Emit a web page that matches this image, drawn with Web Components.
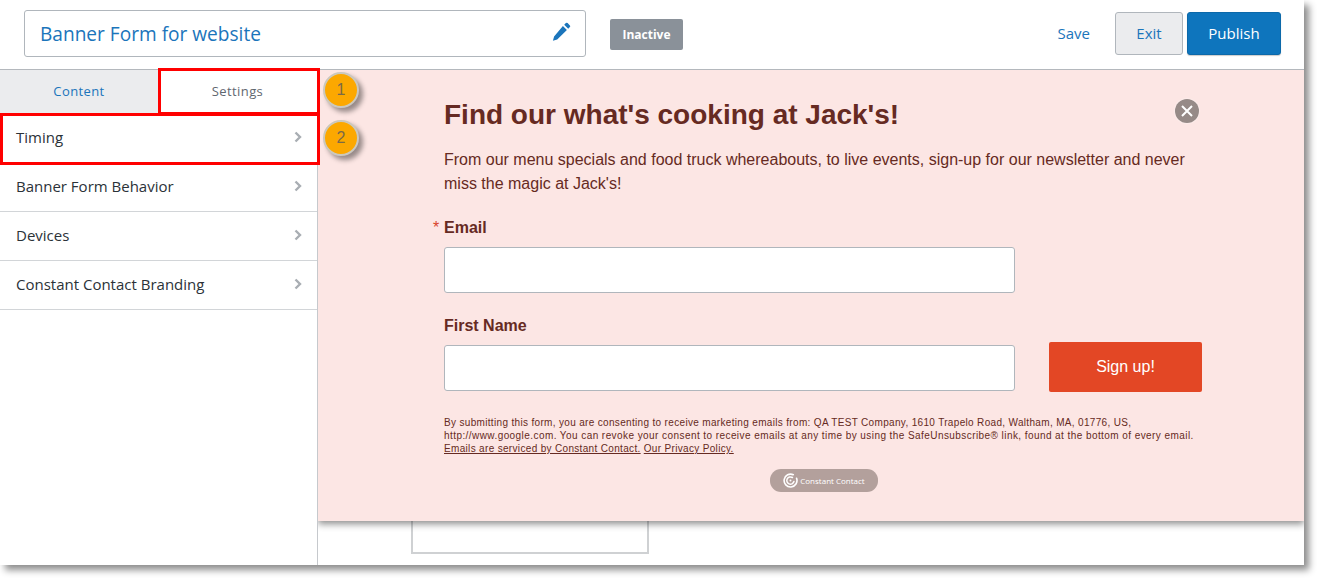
<!DOCTYPE html>
<html>
<head>
<meta charset="utf-8">
<title>Banner Form</title>
<style>
html, body { margin: 0; height: 100%; background: #fff; overflow: hidden; }
body { font-family: "Open Sans", sans-serif; }
</style>
</head>
<body>
<app-frame>
  <app-header slot="header"></app-header>
  <side-panel slot="side"></side-panel>
  <banner-form slot="main"></banner-form>
</app-frame>

<script>
class AppFrame extends HTMLElement {
    connectedCallback() {
        this.attachShadow({mode: 'open'});
        this.shadowRoot.innerHTML = `
      <style>
:host {
  display: grid;
  grid-template-rows: 70px 1fr;
  grid-template-columns: 318px 1fr;
  grid-template-areas:
    "header header"
    "side main";
  width: 1304px;
  height: 565px;
  background: #fff;
  box-shadow: 5px 5px 7px rgba(0,0,0,0.45);
  position: relative;
}
header { grid-area: header; }
aside { grid-area: side; border-right: 1px solid #c6c9cd; min-height: 0; position: relative; z-index: 2; }
main { grid-area: main; min-width: 0; min-height: 0; overflow: hidden; }
      </style>
      <header><slot name="header"></slot></header>
      <aside><slot name="side"></slot></aside>
      <main><slot name="main"></slot></main>
    `;
    }
}

class AppHeader extends HTMLElement {
    connectedCallback() {
        this.attachShadow({mode: 'open'});
        this.shadowRoot.innerHTML = `
      <style>
:host {
  display: flex;
  align-items: flex-start;
  height: 70px;
  box-sizing: border-box;
  border-bottom: 1px solid #b4b8bd;
  padding: 10px 23px 0 24px;
  font-family: "Open Sans", sans-serif;
}
.title {
  width: 562px;
  height: 47px;
  box-sizing: border-box;
  border: 1px solid #b0b6bc;
  border-radius: 3px;
  display: flex;
  align-items: center;
  justify-content: space-between;
  padding: 0 14px 0 15px;
  font-size: 19.1px;
  color: #1b75bb;
}
.title svg { display: block; margin-top: -3px; }
.badge {
  margin: 9px 0 0 24px;
  width: 73px;
  height: 31px;
  box-sizing: border-box;
  background: #8a9199;
  border-radius: 2px;
  color: #fff;
  font-size: 12px;
  font-weight: 700;
  display: flex;
  align-items: center;
  justify-content: center;
}
.actions {
  margin: 2px 0 0 auto;
  display: flex;
  align-items: center;
  font-size: 15px;
}
.save { color: #1b75bb; margin-right: 25px; padding-bottom: 2px; }
.btn {
  height: 43px;
  box-sizing: border-box;
  border-radius: 3px;
  padding-bottom: 2px;
  display: flex;
  align-items: center;
  justify-content: center;
}
.exit { width: 68px; background: #ebecee; border: 1px solid #b0b6bc; color: #1b75bb; margin-right: 4px; }
.publish { width: 94px; background: #0e75bd; border: 1px solid #0c69aa; color: #fff; box-shadow: 0 1px 1px rgba(0,0,0,0.2); }
      </style>
      <div class="title">
        <span>Banner Form for website</span>
        <svg width="20" height="20" viewBox="0 0 20 20"><path fill="#1b75bb" d="M14.9 1.1a1.2 1.2 0 0 1 1.7 0l2.3 2.3a1.2 1.2 0 0 1 0 1.7l-1.7 1.7-4-4zM11.9 3.9l4 4L6.2 17.6l-4.3 1.1 1.2-4.2z"/></svg>
      </div>
      <div class="badge">Inactive</div>
      <div class="actions">
        <span class="save">Save</span>
        <div class="btn exit">Exit</div>
        <div class="btn publish">Publish</div>
      </div>
    `;
    }
}

class SidePanel extends HTMLElement {
    connectedCallback() {
        this.attachShadow({mode: 'open'});
        const rows = ['Timing', 'Banner Form Behavior', 'Devices', 'Constant Contact Branding'];
        this.shadowRoot.innerHTML = `
      <style>
:host {
  display: block;
  font-family: "Open Sans", sans-serif;
  position: relative;
}
.tabs { display: flex; height: 44px; }
.tab {
  display: flex;
  align-items: center;
  justify-content: center;
  font-size: 13px;
  letter-spacing: 0.4px;
  padding-bottom: 3px;
  box-sizing: border-box;
}
.tab.content { width: 158px; background: #ebecee; color: #1b75bb; }
.tab.settings { flex: 1; color: #5f6770; }
.row {
  height: 49px;
  box-sizing: border-box;
  border-bottom: 1px solid #d2d5d8;
  display: flex;
  align-items: center;
  justify-content: space-between;
  padding: 0 15px 2px 16px;
  font-size: 15px;
  color: #2b3238;
}
.mark { position: absolute; border: 3px solid #f00; box-sizing: border-box; }
.mark.one { left: 158px; top: -2px; width: 162px; height: 47px; }
.mark.two { left: 0; top: 43px; width: 320px; height: 52px; }
.num {
  position: absolute;
  left: 323px;
  width: 36px;
  height: 36px;
  box-sizing: border-box;
  border-radius: 50%;
  background: #fca800;
  border: 2px solid #ccc8bd;
  box-shadow: 4px 4px 5px rgba(0,0,0,0.4);
  color: #7a6a48;
  font: 16px/32px "Liberation Sans", sans-serif;
  text-align: center;
}
.num.one { top: 2px; }
.num.two { top: 50px; }
      </style>
      <div class="tabs">
        <div class="tab content">Content</div>
        <div class="tab settings">Settings</div>
      </div>
      ${rows.map(r => `<div class="row"><span>${r}</span>
        <svg width="8" height="12" viewBox="0 0 8 12"><path d="M1.5 1.5l4.5 4.5-4.5 4.5" fill="none" stroke="#a9aeb3" stroke-width="2.4"/></svg></div>`).join('')}
      <div class="mark one"></div>
      <div class="mark two"></div>
      <div class="num one">1</div>
      <div class="num two">2</div>
    `;
    }
}

class BannerForm extends HTMLElement {
    connectedCallback() {
        this.attachShadow({mode: 'open'});
        this.shadowRoot.innerHTML = `
      <style>
:host {
  display: block;
  height: 100%;
  position: relative;
  font-family: "Liberation Sans", Arial, sans-serif;
  color: #662a22;
}
.peek {
  position: absolute;
  left: 93px;
  top: 430px;
  width: 238px;
  height: 54px;
  box-sizing: border-box;
  border: solid #cfd1d3;
  border-width: 0 2px 2px 2px;
  background: #fff;
}
.banner {
  position: relative;
  height: 451px;
  box-sizing: border-box;
  background: #fce6e4;
  box-shadow: 0 3px 7px rgba(0,0,0,0.45);
  padding: 29px 102px 0 126px;
}
h1 { margin: 0; font-size: 28px; line-height: 32px; font-weight: 700; }
p.lead { margin: 17px 0 0; font-size: 16px; line-height: 24px; width: 760px; }
label { display: block; font-size: 16px; font-weight: 700; line-height: 20px; position: relative; }
label.email { margin-top: 22px; }
label.name { margin-top: 23px; }
label i { position: absolute; left: -11px; color: #d8432a; font-style: normal; font-weight: 400; }
.input {
  margin-top: 9px;
  width: 571px;
  height: 46px;
  box-sizing: border-box;
  background: #fff;
  border: 1px solid #b0b6bc;
  border-radius: 3px;
}
.name-row { display: flex; align-items: flex-end; justify-content: space-between; }
.submit {
  width: 153px;
  height: 50px;
  margin-bottom: -1px;
  background: #e34725;
  color: #fff;
  border-radius: 2px;
  font-size: 16px;
  display: flex;
  align-items: center;
  justify-content: center;
}
.legal { margin: 25px 0 0; font-size: 10px; line-height: 13px; letter-spacing: 0.33px; white-space: nowrap; }
.legal .wide { letter-spacing: 0.43px; }
.legal u { text-decoration: underline; }
.brand {
  margin: 14px 0 0 326px;
  width: 108px;
  height: 23px;
  background: #b3a09c;
  border-radius: 11px;
  color: #fff;
  font: 500 8px "Open Sans", sans-serif;
  display: flex;
  align-items: center;
  justify-content: center;
  gap: 2px;
}
.close {
  position: absolute;
  left: 857px;
  top: 29px;
  width: 24px;
  height: 24px;
  border-radius: 50%;
  background: #968a87;
  box-shadow: 0 0 2px rgba(255,255,255,0.8);
}
      </style>
      <div class="peek"></div>
      <div class="banner">
        <h1>Find our what's cooking at Jack's!</h1>
        <p class="lead">From our menu specials and food truck whereabouts, to live events, sign-up for our newsletter and never miss the magic at Jack's!</p>
        <label class="email"><i>*</i>Email</label>
        <div class="input"></div>
        <label class="name">First Name</label>
        <div class="name-row">
          <div class="input"></div>
          <div class="submit">Sign up!</div>
        </div>
        <p class="legal">By submitting this form, you are consenting to receive marketing emails from: QA TEST Company, 1610 Trapelo Road, Waltham, MA, 01776, US,<br><span class="wide">http://www.google.com. You can revoke your consent to receive emails at any time by using the SafeUnsubscribe® link, found at the bottom of every email.</span><br><u>Emails are serviced by Constant Contact.</u> <u>Our Privacy Policy.</u></p>
        <div class="brand">
          <svg width="15" height="15" viewBox="0 0 14 14" fill="none" stroke="#fff" stroke-linecap="round"><path d="M9.6 1.6A6 6 0 1 0 12.7 5" stroke-width="1.5"/><path d="M8.8 4.2A3.4 3.4 0 1 0 10.2 8" stroke-width="1.4"/><circle cx="7" cy="7" r="0.9" fill="#fff" stroke="none"/></svg>
          <span>Constant Contact</span>
        </div>
        <svg class="close" viewBox="0 0 24 24"><path d="M7 7l10 10M17 7L7 17" stroke="#fff" stroke-width="2" fill="none"/></svg>
      </div>
    `;
    }
}

customElements.define('app-frame', AppFrame);
customElements.define('app-header', AppHeader);
customElements.define('side-panel', SidePanel);
customElements.define('banner-form', BannerForm);
</script>
</body>
</html>
